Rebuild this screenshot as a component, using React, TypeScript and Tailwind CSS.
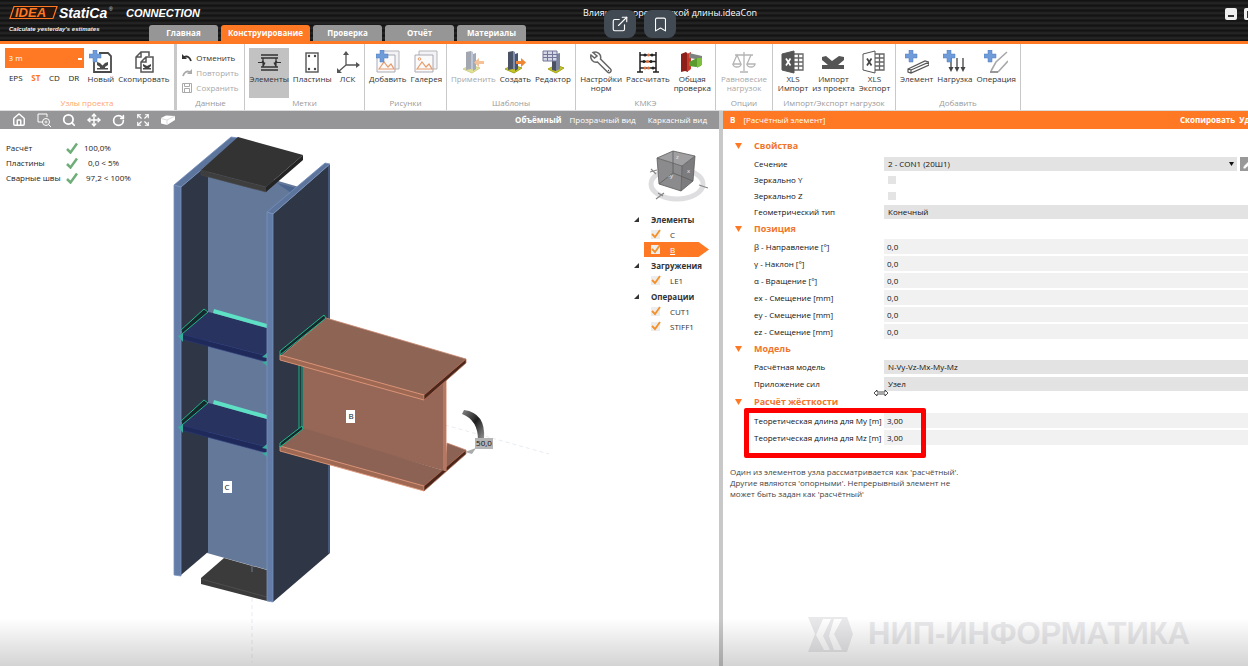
import { useId, type ReactNode } from "react";
import { Bookmark, Expand, ExternalLink, House, Move, Pencil, RotateCw, Search } from "lucide-react";
import clsx from "clsx";

type IconProps = { children: ReactNode; className?: string };

const Icon = ({ children, className }: IconProps) => (
	<svg viewBox="0 0 24 24" className={clsx("h-6 w-6 shrink-0", className)} fill="none" aria-hidden="true">
		{children}
	</svg>
);

const BluePlus = () => <path d="M4 0h4v4h4v4H8v4H4V8H0V4h4z" fill="#6f9bd8" stroke="#4d7cc0" strokeWidth=".5" />;

const NewIcon = () => (
	<Icon>
		<path d="M10 3h9l3 3v16H5V11" stroke="#4a4a4a" strokeWidth="1.8" />
		<path d="M8 12l3 1 2.500 2.500L16 13l3-1v3l-3 2v1h3v1.500H8V18h3v-1l-3-2z" fill="#4a4a4a" />
		<BluePlus />
	</Icon>
);

const CopyIcon = () => (
	<Icon>
		<path d="M9 18H4V7l5-5h8v4M9 2v5H4" stroke="#555" strokeWidth="1.500" />
		<path d="M9 12l5-5h7v15H9zM14 7v5H9" stroke="#555" strokeWidth="1.500" />
		<path d="M11 14l4 2 4-2v2l-2 2h2v1.500h-8V18h2l-2-2z" fill="#444" />
	</Icon>
);

const ElementsIcon = () => (
	<Icon>
		<path d="M4 5h17M4 8h17M4 17h17M4 20h17" stroke="#333" strokeWidth="1.500" />
		<path d="M1 12.500h4l1-2 1 4 1-2M24 12.500h-4l-1-2-1 4-1-2M6 8v9M19 8v9" stroke="#333" strokeWidth="1.200" />
	</Icon>
);

const PlatesIcon = () => (
	<Icon>
		<rect x="6" y="3" width="12" height="19" stroke="#555" strokeWidth="1.400" />
		<g fill="#444">
			<circle cx="9" cy="6" r="1.200" />
			<circle cx="15" cy="6" r="1.200" />
			<circle cx="9" cy="19" r="1.200" />
			<circle cx="15" cy="19" r="1.200" />
		</g>
	</Icon>
);

const AxesIcon = () => (
	<Icon>
		<path d="M10 2v13h13M10 15l-8 7" stroke="#555" strokeWidth="1.300" />
		<path d="M7 5l3-4 3 4zM20 12l4 3-4 3zM1 18v5h5z" fill="#555" />
	</Icon>
);

const PictureIcon = ({ plus }: { plus?: boolean }) => (
	<Icon>
		<path d="M5 1h18v18H5z" fill="#f3f3f5" stroke="#b5b5bb" />
		<path d="M1 5h18v17H1z" fill="#fafafa" stroke="#a9a9b4" />
		<path d="M3 19l5-7 4 5 3-3 3 5z" stroke="#e79a6c" strokeWidth="1.200" />
		{plus ? <BluePlus /> : <circle cx="5.500" cy="9" r="1.300" stroke="#e79a6c" />}
	</Icon>
);

const ColumnIcon = ({ arrow }: { arrow: "left" | "right" }) => (
	<Icon className={arrow === "left" ? "opacity-50" : undefined}>
		<path d="M2 19l8-4 9 3-8 5z" fill="#c4c42a" stroke="#a3a31c" />
		<path d="M5 2l5-1v18l-5 1z" fill="#4a5266" />
		<path d="M10 1l2 1v17l-2 1z" fill="#7e8eae" />
		<path d="M12 4l3-1v16l-3 2z" fill="#4a556e" />
		{arrow === "right" ? (
			<path d="M13 11h5V8l5 4.500-5 4.500v-3h-5z" fill="#f08534" />
		) : (
			<path d="M23 11h-5V8l-5 4.500 5 4.500v-3h5z" fill="#f08534" />
		)}
	</Icon>
);

const EditorIcon = () => (
	<Icon>
		<path d="M7 19l8-4 8 3-8 5z" fill="#c4c42a" stroke="#a3a31c" />
		<path d="M11 7h4v14l-4-1z" fill="#4a5064" />
		<path d="M15 4l4-1v16l-4 2z" fill="#7d859c" />
		<path d="M2 1h14v10H2z" fill="#d6d8e6" stroke="#72779a" />
		<path d="M2 4.500h14M2 7.500h14M6.500 1v10M11.500 1v10" stroke="#72779a" />
	</Icon>
);

const WrenchIcon = () => (
	<Icon>
		<path
			d="M4 2.500A5.500 5.500 0 0 1 11.500 9l10 10a1.700 1.700 0 0 1-3 3l-10-10A5.500 5.500 0 0 1 2 5l3.500 3L8 6z"
			stroke="#666"
			strokeWidth="1.500"
		/>
		<circle cx="19.500" cy="20.500" r=".7" fill="#555" />
	</Icon>
);

const AbacusIcon = () => (
	<Icon>
		<path d="M4 2v20M20 2v20M1 22h6M17 22h6M4 5h16M4 11.500h16M4 18h16" stroke="#222" strokeWidth="1.500" />
		<g fill="#222">
			<circle cx="9" cy="5" r="1.500" />
			<circle cx="16" cy="5" r="1.500" />
			<circle cx="8" cy="11.500" r="1.500" />
			<circle cx="15" cy="11.500" r="1.500" />
			<circle cx="17" cy="18" r="1.500" />
		</g>
		<g fill="#e2703a">
			<circle cx="12.500" cy="5" r="1.500" />
			<circle cx="11.500" cy="11.500" r="1.500" />
			<circle cx="9" cy="18" r="1.500" />
			<circle cx="12.500" cy="18" r="1.500" />
		</g>
	</Icon>
);

const CheckModelIcon = () => (
	<Icon>
		<path d="M1 4l5-2 2 2v18l-3-1-4 1z" fill="#8d2018" />
		<path d="M7 4l4-2v17l-4 3z" fill="#c8382b" />
		<path d="M9 3l13 3v4L9 8z" fill="#7f837f" />
		<path d="M9 12l8-4 4 1v7l-5 1-7-1z" fill="#5b9a2b" />
		<path d="M17 8h5v7l-5 3z" fill="#7cbf3e" />
	</Icon>
);

const ScalesIcon = () => (
	<Icon>
		<path
			d="M12 2v19M8 22h8M3 5h18M5 5l-4 9h8zM19 5l-4 9h8M1 14a4 3 0 0 0 8 0M15 14a4 3 0 0 0 8 0z"
			stroke="#b4b4b4"
			strokeWidth="1.300"
		/>
	</Icon>
);

const XlsIcon = ({ outline }: { outline?: boolean }) => (
	<Icon>
		<path d="M13 4h9v16h-9M13 8h9M13 12h9M13 16h9M17.500 4v16" stroke="#666" strokeWidth="1.300" />
		<path d="M1 4l12-3v22L1 20z" fill={outline ? "#fff" : "#555"} stroke="#555" />
		<path d="M5 8.500l4.500 7M9.500 8.500l-4.500 7" stroke={outline ? "#444" : "#fff"} strokeWidth="1.700" />
	</Icon>
);

const ImportProjectIcon = () => (
	<Icon>
		<path d="M1 7l4-1 6 5 7-5 5 1v3l-6 5h6v4H1v-4h6l-6-5z" fill="#555" />
	</Icon>
);

const AddElementIcon = () => (
	<Icon>
		<path d="M3 19L20 11l4 1v3L6 23l-3-1zM3 19l3 1v3M6 20l18-8" stroke="#555" strokeWidth="1.200" />
		<BluePlus />
	</Icon>
);

const AddLoadIcon = () => (
	<Icon>
		<path d="M8 8v12M14 8v12M20 8v12" stroke="#444" strokeWidth="1.300" />
		<path d="M5.500 17h5L8 22zM11.500 17h5L14 22zM17.500 17h5L20 22z" fill="#444" />
		<BluePlus />
	</Icon>
);

const AddOperationIcon = () => (
	<Icon>
		<path d="M23 2L12 12l-5 9M24 11L14 22" stroke="#a9a9a9" strokeWidth="1.600" />
		<path d="M6 22h8" stroke="#777" strokeWidth="1.500" />
		<BluePlus />
	</Icon>
);

const RibbonButton = ({
	icon,
	label,
	active,
	disabled,
}: {
	icon: ReactNode;
	label: string;
	active?: boolean;
	disabled?: boolean;
}) => (
	<button
		type="button"
		disabled={disabled}
		className={clsx(
			"flex h-[50px] flex-col items-center pt-[2px] text-[8px] leading-[9px] whitespace-pre text-[#333] disabled:text-[#a8a8a8]",
			active && "bg-[#c2c2c2]",
		)}>
		{icon}
		<span>{label}</span>
	</button>
);

const RibbonGroup = ({
	title,
	className,
	titleClassName,
	children,
}: {
	title: string;
	className: string;
	titleClassName?: string;
	children: ReactNode;
}) => (
	<section className={clsx("flex shrink-0 flex-col border-[#c9c9c9] pt-1", className)}>
		<div className="flex h-[50px] justify-center gap-1">{children}</div>
		<h2 className={clsx("text-center text-[8px] leading-[10px]", titleClassName ?? "text-[#9a9a9a]")}>{title}</h2>
	</section>
);

const tabs = ["Главная", "Конструирование", "Проверка", "Отчёт", "Материалы"];

const Header = () => (
	<header className="relative flex h-11 border-b-[3px] border-[#ff7823] bg-[repeating-linear-gradient(180deg,#111_0px,#1b1b1c_2px,#29292a_3px,#151516_5px)] text-white">
		<div className="w-[149px] shrink-0 pt-[5px] pl-[9px]">
			<svg viewBox="0 0 140 28" className="h-7 w-[140px] overflow-visible" role="img" aria-label="IDEA StatiCa">
				<path d="M5 1.500h43l-4 12H1z" fill="#26160d" stroke="#ff7823" strokeWidth="1.200" />
				<text
					x="6"
					y="12"
					className="font-['Liberation_Sans'] text-[13px] font-bold italic"
					fill="#ff7823">
					IDEA
				</text>
				<text x="50" y="13" className="font-['Liberation_Sans'] text-[14px] font-bold italic" fill="#fff">
					StatiCa
				</text>
				<text x="100" y="6" className="font-['Liberation_Sans'] text-[5px]" fill="#ddd">
					®
				</text>
				<text x="0" y="26" className="font-['Liberation_Sans'] text-[6px] font-bold italic" fill="#eee">
					Calculate yesterday's estimates
				</text>
			</svg>
		</div>
		<span className="absolute top-[6px] left-[126px] font-['Liberation_Sans'] text-[11px] leading-[14px] font-bold italic">
			CONNECTION
		</span>
		<nav className="flex items-end gap-[3px]">
			{tabs.map((tab) => (
				<button
					key={tab}
					type="button"
					className={clsx(
						"h-4 rounded-t-[3px] text-[8px] font-bold",
						tab === "Конструирование" ? "w-[89px] bg-[#ff7823]" : "w-[69px] bg-[#969696]",
					)}>
					{tab}
				</button>
			))}
		</nav>
		<h1 className="absolute top-[6px] left-[583px] text-[9px] leading-[14px]">
			Влияние теоретической длины.ideaCon
		</h1>
		<div className="absolute top-[10px] left-[604px] flex gap-2">
			<button
				type="button"
				aria-label="Открыть"
				className="flex h-7 w-8 items-center justify-center rounded-lg bg-[#414952]">
				<ExternalLink size={18} strokeWidth={1.5} />
			</button>
			<button
				type="button"
				aria-label="В закладки"
				className="flex h-7 w-8 items-center justify-center rounded-lg bg-[#414952]">
				<Bookmark size={17} strokeWidth={1.5} />
			</button>
		</div>
		<div className="ml-auto flex w-[23px] shrink-0 gap-[7px] overflow-hidden pt-2">
			<button
				type="button"
				aria-label="Свернуть"
				className="flex h-3 w-3 shrink-0 items-end justify-center rounded-[2px] bg-[#eee] pb-[3px]">
				<span className="h-[2px] w-[6px] bg-[#333]" />
			</button>
			<button
				type="button"
				aria-label="Развернуть"
				className="flex h-3 w-3 shrink-0 items-center justify-center rounded-[2px] bg-[#eee]">
				<span className="h-[7px] w-[7px] border border-[#333]" />
			</button>
		</div>
	</header>
);

const Ribbon = () => (
	<div className="flex h-[67px] overflow-hidden border-b border-[#ddd] bg-white">
		<RibbonGroup title="Узлы проекта" className="w-[177px] border-r-[3px]" titleClassName="text-[#ffa56c]">
			<div className="w-[79px]">
				<select
					aria-label="Узел проекта"
					className="block h-5 w-full appearance-none bg-[#ff7823] bg-[linear-gradient(#fff,#fff)] bg-[length:4px_2px] bg-[position:73px_10px] bg-no-repeat pl-1 text-[8px] text-white">
					<option>3 m</option>
				</select>
				<div className="flex h-5 items-center justify-around text-[8px] text-[#222]">
					<button type="button">EPS</button>
					<button type="button" className="font-bold text-[#ff7823]">
						ST
					</button>
					<button type="button">CD</button>
					<button type="button">DR</button>
				</div>
			</div>
			<RibbonButton icon={<NewIcon />} label="Новый" />
			<RibbonButton icon={<CopyIcon />} label="Скопировать" />
		</RibbonGroup>
		<RibbonGroup title="Данные" className="w-[68px] border-r">
			<div className="flex flex-col items-start text-[8px]">
				<button type="button" className="flex h-[15px] items-center gap-1 pt-1 text-[#333]">
					<svg viewBox="0 0 10 10" className="h-[10px] w-[10px]" fill="none">
						<path d="M0 1v5h5z" fill="#333" />
						<path d="M2 4q5-2 7 4" stroke="#333" strokeWidth="1.800" />
					</svg>
					Отменить
				</button>
				<button type="button" disabled className="flex h-[15px] items-center gap-1 pt-1 text-[#a8a8a8]">
					<svg viewBox="0 0 10 10" className="h-[10px] w-[10px]" fill="none">
						<path d="M10 1v5H5z" fill="#aaa" />
						<path d="M8 4Q3 2 1 8" stroke="#aaa" strokeWidth="1.800" />
					</svg>
					Повторить
				</button>
				<button type="button" disabled className="flex h-[15px] items-center gap-1 pt-1 text-[#a8a8a8]">
					<svg viewBox="0 0 10 10" className="h-[10px] w-[10px]" fill="none" stroke="#aaa">
						<path d="M.5.5h9v9h-9zM2.500.5v3h5v-3M2.500 9.500v-4h5v4" />
					</svg>
					Сохранить
				</button>
			</div>
		</RibbonGroup>
		<RibbonGroup title="Метки" className="w-[120px] border-r">
			<RibbonButton icon={<ElementsIcon />} label="Элементы" active />
			<RibbonButton icon={<PlatesIcon />} label="Пластины" />
			<RibbonButton icon={<AxesIcon />} label="ЛСК" />
		</RibbonGroup>
		<RibbonGroup title="Рисунки" className="w-[82px] border-r">
			<RibbonButton icon={<PictureIcon plus />} label="Добавить" />
			<RibbonButton icon={<PictureIcon />} label="Галерея" />
		</RibbonGroup>
		<RibbonGroup title="Шаблоны" className="w-[129px] border-r">
			<RibbonButton icon={<ColumnIcon arrow="left" />} label="Применить" disabled />
			<RibbonButton icon={<ColumnIcon arrow="right" />} label="Создать" />
			<RibbonButton icon={<EditorIcon />} label="Редактор" />
		</RibbonGroup>
		<RibbonGroup title="КМКЭ" className="w-[140px] border-r">
			<RibbonButton icon={<WrenchIcon />} label={"Настройки\nнорм"} />
			<RibbonButton icon={<AbacusIcon />} label="Рассчитать" />
			<RibbonButton icon={<CheckModelIcon />} label={"Общая\nпроверка"} />
		</RibbonGroup>
		<RibbonGroup title="Опции" className="w-[57px] border-r">
			<RibbonButton icon={<ScalesIcon />} label={"Равновесие\nнагрузок"} disabled />
		</RibbonGroup>
		<RibbonGroup title="Импорт/Экспорт нагрузок" className="w-[123px] border-r">
			<RibbonButton icon={<XlsIcon />} label={"XLS\nИмпорт"} />
			<RibbonButton icon={<ImportProjectIcon />} label={"Импорт\nиз проекта"} />
			<RibbonButton icon={<XlsIcon outline />} label={"XLS\nЭкспорт"} />
		</RibbonGroup>
		<RibbonGroup title="Добавить" className="w-[125px] border-r">
			<RibbonButton icon={<AddElementIcon />} label="Элемент" />
			<RibbonButton icon={<AddLoadIcon />} label="Нагрузка" />
			<RibbonButton icon={<AddOperationIcon />} label="Операция" />
		</RibbonGroup>
	</div>
);

const ViewToolbar = () => (
	<div className="flex h-[18px] items-center bg-[#969698] pr-3 pl-3 text-[8px] text-white">
		<div className="flex items-center gap-[11px]">
			<button type="button" aria-label="Домой">
				<House size={14} strokeWidth={2.5} />
			</button>
			<button type="button" aria-label="Увеличить область">
				<svg viewBox="0 0 14 14" className="h-[14px] w-[14px]" fill="none" stroke="#fff">
					<path d="M6 9H1V1h9v3M11.500 11.500L14 14" />
					<circle cx="9" cy="9" r="3.500" />
					<path d="M9 7.500v3M7.500 9h3" strokeWidth=".8" />
				</svg>
			</button>
			<button type="button" aria-label="Масштаб">
				<Search size={14} strokeWidth={3} />
			</button>
			<button type="button" aria-label="Переместить">
				<Move size={14} strokeWidth={2.5} />
			</button>
			<button type="button" aria-label="Повернуть">
				<RotateCw size={13} strokeWidth={3} />
			</button>
			<button type="button" aria-label="Показать всё">
				<Expand size={14} />
			</button>
			<button type="button" aria-label="Вид">
				<svg viewBox="0 0 14 10" className="h-[10px] w-[14px]" fill="#fff">
					<path d="M0 3l5-2.500L14 1v4L6 10 0 8.500z" />
					<path d="M0 3.500l6 1.500 8-4M6 5v5" fill="none" stroke="#ccc" strokeWidth=".7" />
				</svg>
			</button>
		</div>
		<div className="ml-auto flex gap-2">
			<button type="button" className="font-bold">
				Объёмный
			</button>
			<button type="button">Прозрачный вид</button>
			<button type="button" className="ml-1">
				Каркасный вид
			</button>
		</div>
	</div>
);

const results = [
	["Расчёт", "100,0%"],
	["Пластины", "0,0 < 5%"],
	["Сварные швы", "97,2 < 100%"],
];

const Results = () => (
	<table className="mt-3 ml-[6px] h-11 w-[136px] shrink-0 self-start text-[8px] leading-[10px] text-[#222]">
		<tbody>
			{results.map(([name, value], i) => (
				<tr key={name}>
					<th scope="row" className="w-[60px] text-left font-normal whitespace-nowrap">
						{name}
					</th>
					<td className="w-[18px]">
						<svg viewBox="0 0 12 12" className="h-3 w-3" fill="none">
							<path d="M1 7l3.500 3.500L11 1.500" stroke="#6fae78" strokeWidth="2.500" />
						</svg>
					</td>
					<td className={clsx("whitespace-nowrap", i === 1 && "pl-1", i === 2 && "pl-[2px]")}>{value}</td>
				</tr>
			))}
		</tbody>
	</table>
);

// One stiffener plate with its welds; the lower one repeats it further down the column.
const Stiffener = () => (
	<g>
		<path d="M181 334l27-22 5 1 54 15v28z" fill="#28335f" />
		<path d="M181 334l86 22v6l-86-23z" fill="#202a5a" stroke="#2c3b7a" strokeWidth=".6" />
		<path d="M214 309l53 15v4l-54-15z" fill="#5de0c4" />
		<path d="M181 330l23-21 4 3-26 22z" fill="#17282c" stroke="#20b58c" />
		<path d="M178 336l5-3v9zM267 353l-5 4 5 1zM267 361l-5 1 5 4z" fill="#35ae9b" />
	</g>
);

const Model = () => (
	<svg viewBox="160 129 400 537" className="h-[537px] w-[400px] shrink-0" role="img" aria-label="Модель узла">
		<path d="M252 570v92M445 425l104 29" stroke="#e2e6ee" strokeDasharray="4 3" strokeWidth=".8" />
		{/* column web and left flange */}
		<path d="M207 160l33 10 59 17-31 30v353l-61-17z" fill="#64799a" />
		<path d="M277 183l23 6-6 6z" fill="#4c658f" />
		<path d="M181 187l27-23v388l-27 23z" fill="#2f3645" />
		<path d="M174 185l57-48 8 1-58 49z" fill="#5d759d" stroke="#7591bd" strokeWidth=".8" />
		<path d="M174 185l7 2v389l-7-1z" fill="#637da8" stroke="#7893bd" strokeWidth=".8" />
		{/* base plate */}
		<path d="M224 558l43 12v31l-66-17v-6z" fill="#3b3b3b" />
		<path d="M201 579l66 18" stroke="#4d4d4d" />
		<path d="M252 563v9" stroke="#6e7c95" />
		<Stiffener />
		<g transform="translate(0 91)">
			<Stiffener />
		</g>
		{/* right flange */}
		<path d="M273 214l57-50v389l-57 49z" fill="#2f3645" />
		<path d="M329 165v388" stroke="#4e648c" strokeWidth="1.500" />
		<path d="M267 212l58-49 5 1-57 50z" fill="#5d759d" stroke="#7591bd" strokeWidth=".8" />
		<path d="M267 212l6 2v388l-6-1z" fill="#637da8" stroke="#7893bd" strokeWidth=".8" />
		{/* cap plate */}
		<path d="M238 137l65 18-37 32-65-17z" fill="#333" />
		<path d="M201 170l65 17v5l-65-17z" fill="#3e3e3e" stroke="#484848" strokeWidth=".6" />
		<path d="M266 187l37-32v5l-37 32z" fill="#242424" />
		{/* beam */}
		<path d="M447 443l19 7-22 20z" fill="#8c6254" stroke="#c98770" strokeWidth=".8" />
		<path d="M303 366l142 14v91l-142-41z" fill="#966757" />
		<path d="M280 446l23-18 142 43-21 17z" fill="#8c6254" />
		<path d="M280 446l144 40v5l-144-40z" fill="#9f6852" stroke="#e0987c" strokeWidth=".9" />
		<path d="M424 486l42-36v4l-42 37z" fill="#4a261b" stroke="#b56f57" strokeWidth=".8" />
		<path d="M445 379v92" stroke="#d08a72" strokeWidth="3" />
		<path d="M445 379v92" stroke="#9c6652" strokeWidth="1" />
		<path d="M299 364h3v65l-3 2z" fill="#1c3d3c" stroke="#1fae84" />
		<path d="M280 447v-4l22-17 1 3z" fill="#17282c" stroke="#20b58c" />
		<path d="M326 318l140 41-42 38-144-40z" fill="#8e6455" stroke="#c98770" strokeWidth=".8" />
		<path d="M280 355l144 40v5l-144-40z" fill="#9f6852" stroke="#e0987c" strokeWidth=".9" />
		<path d="M424 395l42-36v4l-42 37z" fill="#4a261b" stroke="#b56f57" strokeWidth=".8" />
		<path d="M280 355v-4l44-36 2 3z" fill="#17282c" stroke="#20b58c" />
		{/* rotation marker */}
		<path d="M464 410q22 3 20 29l-6 1q0-20-16-26z" fill="url(#arc)" />
		<path d="M465 452l11-4-4 6z" fill="#ababab" />
		<defs>
			<linearGradient id="arc" x1="0" y1="0" x2="1" y2="1">
				<stop offset="0" stopColor="#888" />
				<stop offset=".5" stopColor="#1d1d1d" />
				<stop offset="1" stopColor="#999" />
			</linearGradient>
		</defs>
		<path d="M475 438h18v11h-18z" fill="#b5b5b5" />
		<path d="M346 410h9v13h-9zM223 481h9v12h-9z" fill="#fff" />
		<g fill="#111" textAnchor="middle" className="text-[8px]">
			<text x="484" y="446">
				50,0
			</text>
			<text x="351" y="419">
				B
			</text>
			<text x="227" y="490">
				C
			</text>
		</g>
	</svg>
);

const ViewCube = () => (
	<svg viewBox="0 0 64 54" className="mb-2 ml-3 h-[54px] w-16" fill="none" role="img" aria-label="Куб вида">
		<ellipse cx="31" cy="34" rx="26" ry="15" stroke="#dedee0" strokeWidth="5" />
		<path d="M11 8l16-7 22 5-13 10z" fill="#a0a0a2" />
		<path d="M11 8l25 8-1 25-22-7z" fill="#8b8b8d" />
		<path d="M36 16L49 6l-2 25-12 10z" fill="#7c7c7e" />
		<path d="M11 8l16-7 22 5-13 10zM11 8l2 26 22 7 12-10 2-25M36 16l-1 25M27 1v22l20 8M27 23L13 34" stroke="#5c5c5c" strokeWidth=".8" />
		<path d="M4 22l7-2M5 19l5 5M10 49l8-6M12 43l5 3M53 35l9 3" stroke="#888" strokeWidth="1.200" />
		<g fill="#eee" className="text-[6px]">
			<text x="30" y="9">
				z
			</text>
			<text x="22" y="28">
				-y
			</text>
			<text x="41" y="23">
				x
			</text>
		</g>
	</svg>
);

const tree = [
	{ title: "Элементы", items: ["C", "B"] },
	{ title: "Загружения", items: ["LE1"] },
	{ title: "Операции", items: ["CUT1", "STIFF1"] },
];

const ModelTree = () => (
	<aside className="ml-auto w-[85px] shrink-0 pt-[21px] text-[8px] leading-[15px] text-[#333]">
		<ViewCube />
		{tree.map((group) => (
			<section key={group.title} className="mb-[1px]">
				<h3 className="flex h-[15px] items-center gap-3 font-bold">
					<svg viewBox="0 0 5 5" className="h-[5px] w-[5px]">
						<path d="M5 0v5H0z" fill="#333" />
					</svg>
					{group.title}
				</h3>
				{group.items.map((item) => (
					<label
						key={item}
						className={clsx(
							"ml-[10px] flex h-[15px] items-center gap-[10px] pl-[7px]",
							item === "B" &&
								"w-[65px] bg-[#ff7823] text-white underline [clip-path:polygon(0_0,84%_0,100%_50%,84%_100%,0_100%)]",
						)}>
						<span className="grid">
							<input
								type="checkbox"
								defaultChecked
								className="peer col-start-1 row-start-1 h-[9px] w-[9px] appearance-none bg-[#ededed]"
							/>
							<svg
								viewBox="0 0 9 9"
								fill="none"
								className="pointer-events-none invisible col-start-1 row-start-1 h-[9px] w-[9px] overflow-visible peer-checked:visible">
								<path d="M1 4l3 3 5-7" stroke="#f3912d" strokeWidth="1.800" />
							</svg>
						</span>
						{item}
					</label>
				))}
			</section>
		))}
	</aside>
);

type FieldDef = { label: string; value?: string; kind: "select" | "text" | "check"; edit?: boolean };

const sections: { title: string; head: string; fields: FieldDef[] }[] = [
	{
		title: "Свойства",
		head: "h-5",
		fields: [
			{ label: "Сечение", value: "2 - CON1 (20Ш1)", kind: "select", edit: true },
			{ label: "Зеркально Y", kind: "check" },
			{ label: "Зеркально Z", kind: "check" },
			{ label: "Геометрический тип", value: "Конечный", kind: "select" },
		],
	},
	{
		title: "Позиция",
		head: "h-[18px]",
		fields: [
			{ label: "β - Направление [°]", value: "0,0", kind: "text" },
			{ label: "γ - Наклон [°]", value: "0,0", kind: "text" },
			{ label: "α - Вращение [°]", value: "0,0", kind: "text" },
			{ label: "ex - Смещение [mm]", value: "0,0", kind: "text" },
			{ label: "ey - Смещение [mm]", value: "0,0", kind: "text" },
			{ label: "ez - Смещение [mm]", value: "0,0", kind: "text" },
		],
	},
	{
		title: "Модель",
		head: "h-[18px]",
		fields: [
			{ label: "Расчётная модель", value: "N-Vy-Vz-Mx-My-Mz", kind: "select" },
			{ label: "Приложение сил", value: "Узел", kind: "select" },
		],
	},
	{
		title: "Расчёт жёсткости",
		head: "h-5",
		fields: [
			{ label: "Теоретическая длина для My [m]", value: "3,00", kind: "text" },
			{ label: "Теоретическая длина для Mz [m]", value: "3,00", kind: "text" },
		],
	},
];

const Field = ({ label, value, kind, edit }: FieldDef) => {
	const id = useId();

	return (
		<div className="flex items-center pl-[19px]">
			<label htmlFor={id} className="w-[130px] shrink-0 font-medium whitespace-nowrap">
				{label}
			</label>
			{kind === "check" && <input id={id} type="checkbox" className="ml-1 h-2 w-2 appearance-none bg-[#e4e4e4]" />}
			{kind === "text" && (
				<input id={id} defaultValue={value} className="h-[15px] min-w-0 flex-1 bg-[#f1f1f1] pl-[3px] font-medium" />
			)}
			{kind === "select" && (
				<span className="grid min-w-0 flex-1 items-center">
					<select
						id={id}
						className="col-start-1 row-start-1 h-[14px] w-full appearance-none bg-[#e3e3e3] pl-1 font-medium">
						<option>{value}</option>
					</select>
					{edit && (
						<svg
							viewBox="0 0 5 4"
							className="pointer-events-none col-start-1 row-start-1 mr-[3px] h-1 w-[5px] justify-self-end">
							<path d="M0 0h5L2.500 4z" fill="#111" />
						</svg>
					)}
				</span>
			)}
			{edit && (
				<button
					type="button"
					aria-label="Изменить сечение"
					className="ml-[3px] flex h-[14px] w-2 items-center overflow-hidden bg-[#999] pl-[3px] text-white">
					<Pencil size={9} fill="currentColor" className="shrink-0" />
				</button>
			)}
		</div>
	);
};

const Properties = () => (
	<div className="relative pt-[7px] pl-3 text-[8px] text-[#111]">
		{sections.map((section, i) => (
			<section key={section.title}>
				<h3 className={clsx("flex items-center gap-3 text-[9px] font-bold text-[#f0762b]", section.head)}>
					<svg viewBox="0 0 7 6" className="h-[6px] w-[7px]">
						<path d="M0 0h7L3.500 6z" fill="#ff7823" />
					</svg>
					{section.title}
				</h3>
				<div className={clsx("grid items-center", i === 0 ? "auto-rows-[16px]" : "auto-rows-[17px]")}>
					{section.fields.map((field) => (
						<Field key={field.label} {...field} />
					))}
				</div>
			</section>
		))}
		{/* highlight around the theoretical lengths */}
		<div className="pointer-events-none absolute bottom-[-12px] left-[21px] h-[50px] w-[182px] rounded-[2px] border-[5px] border-[#fe0000]" />
		<svg viewBox="0 0 16 8" className="pointer-events-none absolute bottom-[49px] left-[150px] h-2 w-4">
			<path d="M4 1L1 4l3 3V5h8v2l3-3-3-3v2H4z" fill="#fff" stroke="#222" strokeWidth=".8" />
		</svg>
	</div>
);

const Watermark = () => (
	<div className="mt-auto mb-[14px] flex items-center gap-[15px] pl-[85px] text-[#e9e9eb]">
		<svg viewBox="0 0 45 35" className="h-[35px] w-[45px] shrink-0">
			<path d="M0 0h39l6 17-6 18H0l7-18z" fill="currentColor" />
			<path
				d="M15 2h8l-8 17 7 14h-6L8 18zM26 2h8l-8 15 8 16h-8l-5-14z"
				fill="#fff"
			/>
		</svg>
		<span className="font-['Liberation_Sans',sans-serif] text-[31px] leading-[36px] font-bold whitespace-nowrap">
			НИП-ИНФОРМАТИКА
		</span>
	</div>
);

const App = () => (
	<div className="relative flex min-h-screen flex-col overflow-hidden bg-white font-['Open_Sans','Noto_Sans',sans-serif]">
		<Header />
		<Ribbon />
		<main className="flex flex-1">
			<div className="flex min-w-0 flex-[719] flex-col">
				<ViewToolbar />
				<div className="flex flex-1">
					<Results />
					<div className="w-[18px] shrink" />
					<Model />
					<ModelTree />
				</div>
			</div>
			<div className="w-1 shrink-0 bg-[#c8c8c8]" />
			<div className="flex min-w-0 flex-[525] flex-col">
				<div className="flex h-[18px] items-center overflow-hidden bg-[#ff7823] pl-[7px] text-[8px] whitespace-nowrap text-white">
					<h2 className="flex gap-2">
						<b>B</b>
						<span>[Расчётный элемент]</span>
					</h2>
					<div className="ml-auto flex w-[68px] gap-1 font-bold">
						<button type="button">Скопировать</button>
						<button type="button">Удалить</button>
					</div>
				</div>
				<Properties />
				<p className="mt-5 w-[240px] pl-[7px] text-[8px] leading-[11px] text-[#444]">
					Один из элементов узла рассматривается как 'расчётный'. Другие являются 'опорными'. Непрерывный элемент не
					может быть задан как 'расчётный'
				</p>
				<Watermark />
			</div>
		</main>
		<div className="pointer-events-none absolute inset-x-0 bottom-0 h-12 bg-linear-to-b from-transparent to-black/17" />
	</div>
);

export default App;
